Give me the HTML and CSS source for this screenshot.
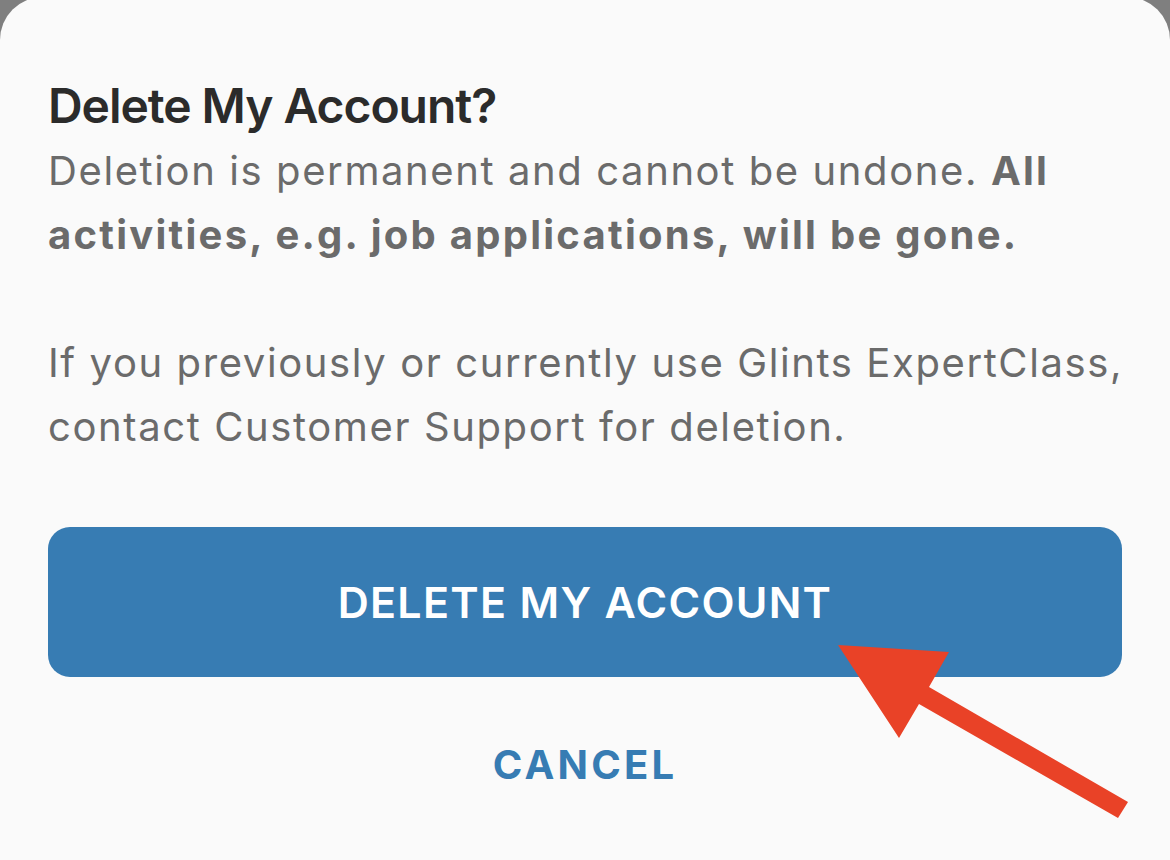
FILE: index.html
```html
<!DOCTYPE html>
<html lang="en">
<head>
<meta charset="utf-8">
<title>Delete My Account</title>
<link rel="stylesheet" href="styles.css">
</head>
<body>
<div class="sheet">
  <h1 class="title">Delete My Account?</h1>
  <p class="text">Deletion is permanent and cannot be undone. <b>All<br>activities, e.g. job applications, will be gone.</b><br><br>If you previously or currently use Glints ExpertClass,<br>contact Customer Support for deletion.</p>
  <button class="primary">DELETE MY ACCOUNT</button>
  <button class="cancel">CANCEL</button>
</div>
<svg class="arrow" width="1170" height="860" viewBox="0 0 1170 860">
  <polygon points="838,645 949,652 929,687 1128,802 1118,818 919,704 899,738" fill="#e94227"/>
</svg>
</body>
</html>
```
FILE: styles.css
```css
html, body {
  margin: 0;
  padding: 0;
}
body {
  width: 1170px;
  height: 860px;
  overflow: hidden;
  background: #7f7f7f;
  position: relative;
  font-family: Inter, "Noto Sans", sans-serif;
}
.sheet {
  margin-top: -3px;
  height: 863px;
  box-sizing: border-box;
  background: #fafafa;
  border-radius: 43px 43px 0 0;
  padding: 79px 48px 0 48px;
  display: flex;
  flex-direction: column;
}
.title {
  margin: 0;
  font-size: 48px;
  line-height: 60px;
  font-weight: 600;
  color: #2b2b2b;
  letter-spacing: -1.05px;
}
.text {
  margin: 3px 0 0 0;
  font-size: 40px;
  line-height: 64px;
  font-weight: 400;
  color: #6b6b6b;
  white-space: nowrap;
  letter-spacing: 1.6px;
}
.text b {
  font-weight: 700;
  letter-spacing: 2.25px;
}
.primary {
  margin-top: 68px;
  height: 150px;
  border: none;
  border-radius: 22px;
  background: #377cb3;
  color: #ffffff;
  font-family: inherit;
  font-size: 43px;
  font-weight: 600;
  letter-spacing: 1.3px;
  display: flex;
  align-items: center;
  justify-content: center;
  padding: 0;
}
.cancel {
  margin-top: 63px;
  align-self: center;
  border: none;
  background: none;
  padding: 0;
  color: #377cb3;
  font-family: inherit;
  font-size: 40px;
  line-height: 50px;
  font-weight: 700;
  letter-spacing: 3.2px;
}
.arrow {
  position: absolute;
  left: 0;
  top: 0;
  pointer-events: none;
}
```
